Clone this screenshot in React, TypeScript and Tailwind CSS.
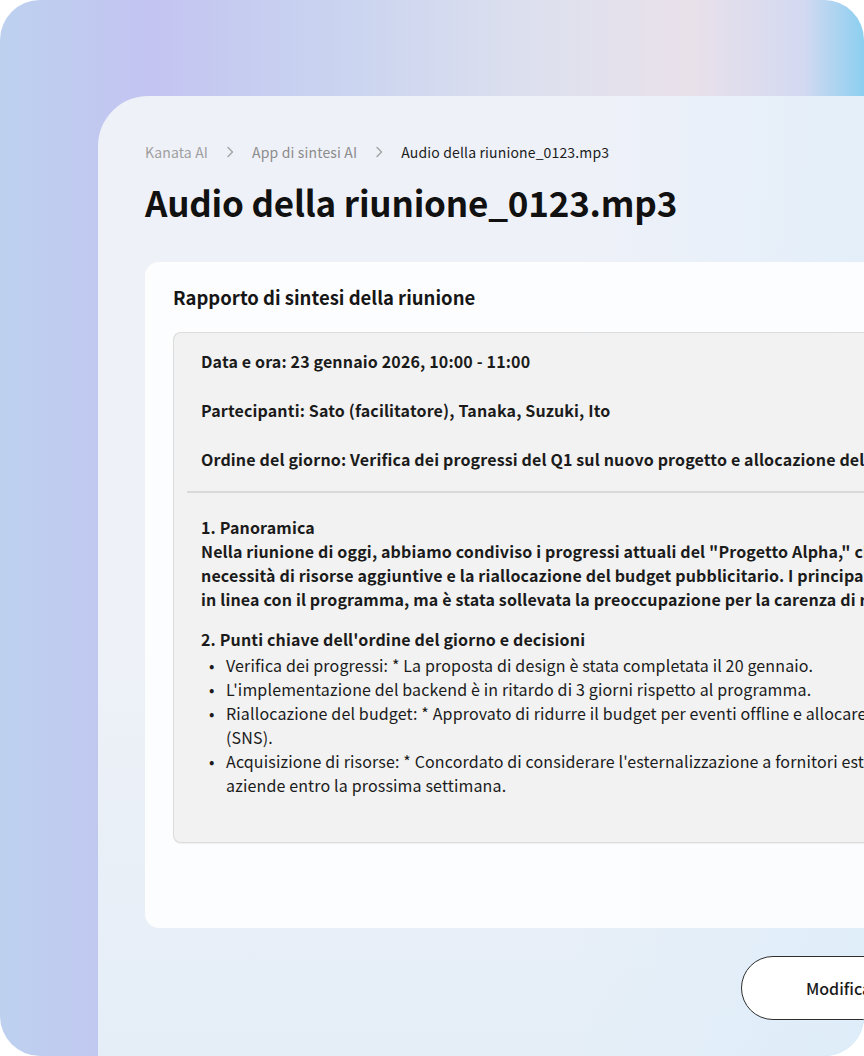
import * as React from 'react'

const font = { fontFamily: '"Noto Sans CJK JP", "Noto Sans", sans-serif' }

function Chevron() {
  return (
    <svg
      className="mx-[18px] h-[12px] w-[8px] shrink-0 text-[#a3a3a3]"
      viewBox="0 0 8 12"
      fill="none"
      stroke="currentColor"
      strokeWidth="1.4"
      strokeLinecap="round"
      strokeLinejoin="round"
      aria-hidden="true"
    >
      <path d="M2 1.5 6.5 6 2 10.5" />
    </svg>
  )
}

const bullets: string[][] = [
  ['Verifica dei progressi: * La proposta di design è stata completata il 20 gennaio.'],
  ["L'implementazione del backend è in ritardo di 3 giorni rispetto al programma."],
  [
    'Riallocazione del budget: * Approvato di ridurre il budget per eventi offline e allocare la differenza alla pubblicità sui social media',
    '(SNS).',
  ],
  [
    "Acquisizione di risorse: * Concordato di considerare l'esternalizzazione a fornitori esterni e di raccogliere preventivi da tre",
    'aziende entro la prossima settimana.',
  ],
]

export default function App() {
  return (
    <div className="h-[1056px] w-[864px] overflow-hidden bg-white" style={font}>
      <div className="flex h-full w-full overflow-hidden rounded-[40px] bg-[linear-gradient(90deg,#bdd1ef_0%,#c3c4f1_17%,#c9d3f0_38%,#dde0ee_62%,#e9e1ea_80%,#d3d9f1_93%,#8ccff0_100%)] pl-[98px] pt-[96px]">
        <div className="flex w-[860px] shrink-0 flex-col rounded-tl-[50px] bg-[linear-gradient(90deg,rgba(255,255,255,0)_55%,rgba(214,236,252,0.6)_100%),linear-gradient(180deg,#eff1f8_0%,#eef1f8_55%,#e5eef7_100%)] pl-[47px] pt-[46px]">
          <nav aria-label="Breadcrumb" className="flex h-[20px] items-center text-[14px] leading-[20px] tracking-[0.15px]">
            <span className="text-[#a0a0a0]">Kanata AI</span>
            <Chevron />
            <span className="text-[#8c8c8c]">App di sintesi AI</span>
            <Chevron />
            <span className="text-[#1c1c1c]">Audio della riunione_0123.mp3</span>
          </nav>

          <h1 className="mt-[18px] text-[35px] font-bold leading-[44px] tracking-[-0.2px] text-[#111111]">
            Audio della riunione_0123.mp3
          </h1>

          <section className="mt-[38px] flex h-[666px] flex-col rounded-l-[14px] bg-white/85 pl-[28px] pt-[21px]">
            <h2 className="text-[18.5px] font-semibold leading-[28px] text-[#161616]">
              Rapporto di sintesi della riunione
            </h2>

            <div className="mt-[21px] h-[511px] overflow-hidden whitespace-nowrap rounded-l-[8px] border border-r-0 border-[#dcdcdc] bg-[#f2f2f2] pl-[13px] pt-[16px] text-[16px] leading-[24px] tracking-[0.15px] text-[#1b1b1b] shadow-[0_1px_1px_rgba(0,0,0,0.06)]">
              <div className="flex flex-col gap-[25px] pl-[14px] font-semibold">
                <p>Data e ora: 23 gennaio 2026, 10:00 - 11:00</p>
                <p>Partecipanti: Sato (facilitatore), Tanaka, Suzuki, Ito</p>
                <p>Ordine del giorno: Verifica dei progressi del Q1 sul nuovo progetto e allocazione del budget</p>
              </div>

              <div className="mt-[20px] h-[2px] bg-[#d9d9d9]" />

              <div className="pl-[14px] pt-[22px]">
                <p className="font-semibold">1. Panoramica</p>
                <p className="font-semibold">
                  <span className="block">
                    Nella riunione di oggi, abbiamo condiviso i progressi attuali del "Progetto Alpha," che è stato avviato a gennaio, e discusso la
                  </span>
                  <span className="block">
                    necessità di risorse aggiuntive e la riallocazione del budget pubblicitario. I principali risultati sono che lo sviluppo procede
                  </span>
                  <span className="block">
                    in linea con il programma, ma è stata sollevata la preoccupazione per la carenza di risorse.
                  </span>
                </p>

                <p className="mt-[16px] font-semibold">
                  2. Punti chiave dell'ordine del giorno e decisioni
                </p>
                <ul className="mt-[2px] pl-[8px]">
                  {bullets.map((lines, i) => (
                    <li key={i} className="flex">
                      <span className="w-[17px] shrink-0">•</span>
                      <span className="flex flex-col">
                        {lines.map((l, j) => (
                          <span key={j}>{l}</span>
                        ))}
                      </span>
                    </li>
                  ))}
                </ul>
              </div>
            </div>
          </section>

          <div className="mt-[28px] flex pl-[596px]">
            <button className="flex h-[64px] w-[200px] shrink-0 items-center rounded-full border-[1.5px] border-[#2e2e2e] bg-white pl-[64px] text-[16px] font-medium text-[#1a1a1a]">
              Modifica
            </button>
          </div>
        </div>
      </div>
    </div>
  )
}
